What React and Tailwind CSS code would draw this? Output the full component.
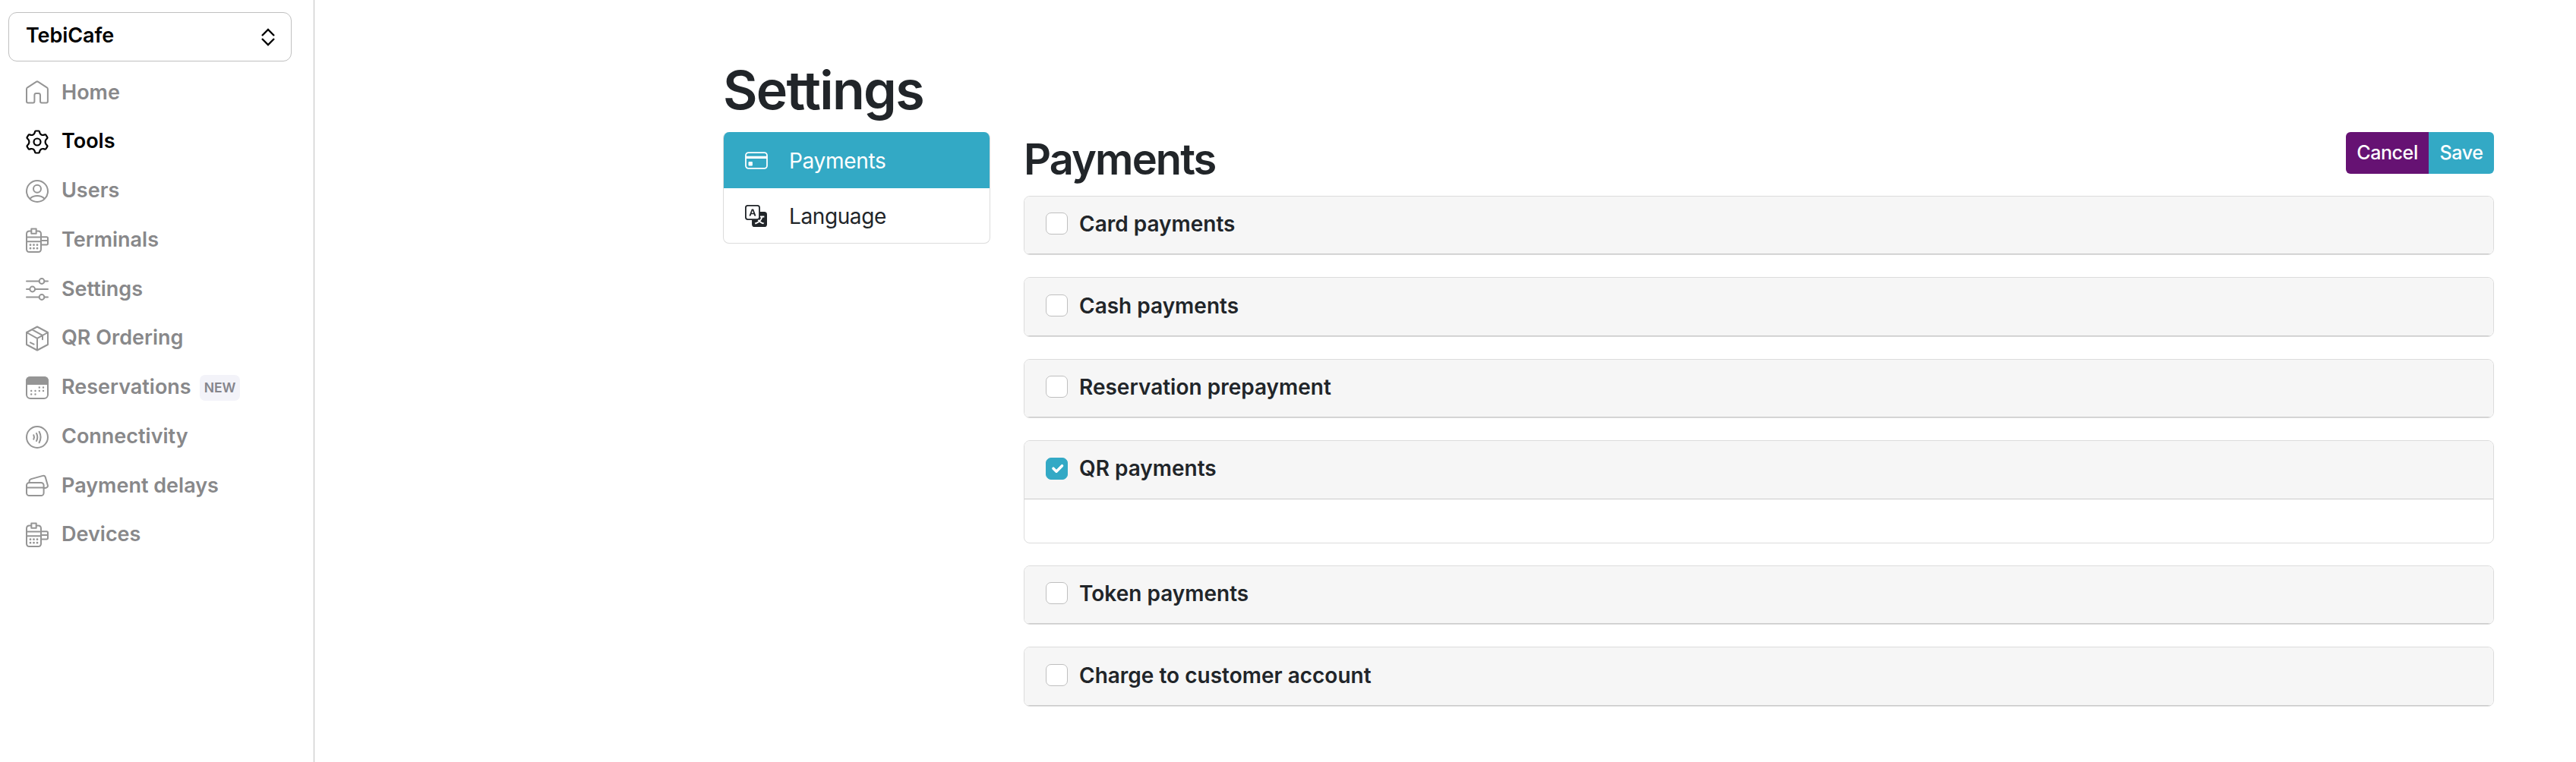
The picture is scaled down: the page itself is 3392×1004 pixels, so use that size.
import React, { useState } from 'react';
import clsx from 'clsx';

function Icon({ children, className }) {
  return (
    <svg
      viewBox="0 0 30 34"
      className={clsx('w-[30px] h-[34px] shrink-0', className)}
      fill="none"
      stroke="currentColor"
      strokeWidth="2"
      strokeLinecap="round"
      strokeLinejoin="round"
    >
      {children}
    </svg>
  );
}

const HomeIcon = () => (
  <Icon>
    <path d="M1 12.400c0-.8.4-1.600 1.100-2.100L13.600 2.800c.8-.5 1.900-.5 2.700 0l11.500 7.500c.7.5 1.100 1.300 1.100 2.100v16.200c0 1.100-.8 1.900-1.900 1.900h-6.100c-1.100 0-1.900-.8-1.900-1.900v-8.200c0-1.600-1-2.400-2.400-2.400h-2.800c-1.400 0-2.400.8-2.400 2.400v8.200c0 1.100-.8 1.900-1.900 1.900H2.900C1.800 30.500 1 29.700 1 28.600z" />
  </Icon>
);

const GearIcon = () => (
  <Icon>
    <circle cx="15" cy="17" r="4.500" strokeWidth="2.200" />
    <path strokeWidth="2.200" d="M11.500 5.400 12.200 3.200Q12.500 2.500 13.300 2.500h3.400Q17.500 2.500 17.800 3.200l.7 2.200q.5 1.300 1.900 2.100 1.400.7 2.800.4l2.100-.5q.9-.1 1.300.6l1.700 2.900q.4.700-.2 1.400l-1.500 1.600q-1 1.300-1 3.100t1 3.100l1.500 1.600q.6.700.2 1.400l-1.700 2.900q-.4.700-1.300.6l-2.100-.5q-1.400-.3-2.800.4-1.400.8-1.900 2.100l-.7 2.200q-.3.700-1.100.7h-3.400q-.8 0-1.100-.7l-.7-2.200q-.5-1.300-1.900-2.100-1.400-.7-2.800-.4l-2.100.5q-.9.100-1.300-.6l-1.700-2.900q-.4-.7.2-1.400l1.500-1.600q1-1.300 1-3.100t-1-3.100L1.900 12.300q-.6-.7-.2-1.400L3.400 8q.4-.7 1.300-.6l2.100.5q1.400.3 2.800-.4 1.400-.8 1.900-2.100z" />
  </Icon>
);

const UserIcon = () => (
  <Icon>
    <circle cx="15" cy="17" r="14" />
    <circle cx="15" cy="13.700" r="5" />
    <path d="M5.800 26.500c2.300-2.300 5.600-3.400 9.200-3.400s6.900 1.100 9.200 3.400" />
  </Icon>
);

const TerminalIcon = () => (
  <Icon>
    <path d="M7.200 4.600H4.800C2.500 4.600 1 6.100 1 8.400v19.800C1 30.500 2.500 32 4.800 32h11.400c2.300 0 3.800-1.500 3.800-3.800V8.400c0-2.300-1.500-3.800-3.800-3.800h-2.400" />
    <path d="M7.300 1.500h6.400v6.300H7.300zM1 12.600h19M1 18.200h19M20 12.300h7.400c1 0 1.600.6 1.600 1.600v6.900c0 1-.6 1.600-1.600 1.600H20M20 17h9" />
    <path strokeWidth="2.800" d="M6 22.700h.01M10.500 22.700h.01M15 22.700h.01M6 27.200h.01M10.500 27.200h.01M15 27.200h.01" />
  </Icon>
);

const SlidersIcon = () => (
  <Icon>
    <path d="M1 6.500h16.500M24.500 6.500H29M1 17h4M12 17h17M1 27.500h16.500M24.500 27.500H29" />
    <circle cx="21" cy="6.500" r="3.400" />
    <circle cx="8.700" cy="17" r="3.400" />
    <circle cx="21" cy="27.500" r="3.400" />
  </Icon>
);

const BoxIcon = () => (
  <Icon>
    <path d="M15 1.500 29 9v16L15 32.500 1 25V9zM1 9l14 7.800L29 9M15 16.800v15.700M8 5.200l14 7.700v5.400M6 22.400l4.600 2.200" />
  </Icon>
);

const CalendarIcon = () => (
  <Icon>
    <rect x="1" y="3" width="28" height="28" rx="5" />
    <path fill="currentColor" d="M1 12V8c0-3 2-5 5-5h18c3 0 5 2 5 5v4z" />
    <path strokeWidth="2.400" d="M17.800 16.500h.01M23 16.500h.01M7.200 21h.01M12.500 21h.01M17.800 21h.01M23 21h.01M7.200 25.500h.01M12.500 25.500h.01" />
  </Icon>
);

const ContactlessIcon = () => (
  <Icon>
    <circle cx="15" cy="17" r="14" />
    <path d="M10.300 14.200c.9 1.800.9 3.800 0 5.600M14 12c1.700 3.200 1.700 6.800 0 10M17.600 9.800c2.500 4.600 2.500 9.800 0 14.400" />
  </Icon>
);

const CardsIcon = () => (
  <Icon>
    <rect x="1" y="13" width="22.600" height="17" rx="3.600" />
    <path d="M1 19.500h22.600M4.600 13V11.300c0-1.600.9-2.700 2.400-3.200l15.300-4.200c1.700-.4 3.100.4 3.500 2l3 10.400c.5 1.700-.4 3.200-2.200 3.500l-3 .5" />
  </Icon>
);

const CreditCardIcon = () => (
  <Icon>
    <rect x="1" y="7.200" width="28" height="20.600" rx="3.500" strokeWidth="1.800" />
    <path d="M1 13.400h28" strokeWidth="3.400" strokeLinecap="butt" />
    <rect x="5.500" y="20" width="3.400" height="3.400" fill="currentColor" />
  </Icon>
);

// bootstrap "translate" glyph
const TranslateIcon = () => (
  <svg viewBox="0 0 16 16" className="w-[29px] h-[29px] shrink-0" fill="currentColor">
    <path d="M4.545 6.714 4.110 8H3l1.862-5h1.284L8 8H6.833l-.435-1.286H4.545zm1.634-.736L5.500 3.956h-.049l-.679 2.022H6.180z" />
    <path d="M0 2a2 2 0 0 1 2-2h7a2 2 0 0 1 2 2v3h3a2 2 0 0 1 2 2v7a2 2 0 0 1-2 2H7a2 2 0 0 1-2-2v-3H2a2 2 0 0 1-2-2V2zm2-1a1 1 0 0 0-1 1v7a1 1 0 0 0 1 1h7a1 1 0 0 0 1-1V2a1 1 0 0 0-1-1H2zm7.138 9.995c.193.301.402.583.630.846-.748.575-1.673 1.001-2.768 1.292.178.217.451.635.555.867 1.125-.359 2.080-.844 2.886-1.494.777.665 1.739 1.165 2.930 1.472.133-.254.414-.673.629-.890-1.125-.253-2.057-.694-2.820-1.284.681-.747 1.222-1.651 1.621-2.757H14V8h-3v1.047h.765c-.318.844-.740 1.546-1.272 2.130a6.066 6.066 0 0 1-.415-.492 1.988 1.988 0 0 1-.940.310z" />
  </svg>
);

const navItems = [
  { label: 'Home', icon: HomeIcon },
  { label: 'Tools', icon: GearIcon, active: true },
  { label: 'Users', icon: UserIcon },
  { label: 'Terminals', icon: TerminalIcon },
  { label: 'Settings', icon: SlidersIcon },
  { label: 'QR Ordering', icon: BoxIcon },
  { label: 'Reservations', icon: CalendarIcon, isNew: true },
  { label: 'Connectivity', icon: ContactlessIcon },
  { label: 'Payment delays', icon: CardsIcon },
  { label: 'Devices', icon: TerminalIcon },
];

const initialMethods = [
  { label: 'Card payments', header: 'h-[76px] pb-1' },
  { label: 'Cash payments', header: 'h-[77px] pb-[3px]' },
  { label: 'Reservation prepayment', header: 'h-[76px] pb-1' },
  { label: 'QR payments', checked: true, header: 'h-[77px] pb-[4px]' },
  { label: 'Token payments', header: 'h-[76px] pb-1' },
  { label: 'Charge to customer account', header: 'h-[77px] pb-[3px]' },
];

function Sidebar() {
  return (
    <aside className="w-[414px] shrink-0 border-r border-[#c0c0c0] pt-4 pl-[11px]">
      <button className="flex items-center justify-between w-[373px] h-[65px] pl-[22px] pr-[21px] rounded-[11px] border border-[#c0c0c0] text-black text-[27px] tracking-[-0.1px] font-semibold">
        <span className="pb-[2px]">TebiCafe</span>
        <svg viewBox="0 0 18 24" className="w-[18px] h-6" fill="none" stroke="currentColor" strokeWidth="2.400">
          <path d="m1 10 8-8 8 8M1 14l8 8 8-8" />
        </svg>
      </button>
      <nav className="mt-[9px] pl-[23px]">
        {navItems.map(({ label, icon: NavIcon, active, isNew }) => (
          <a
            key={label}
            className={clsx(
              'flex items-center h-[64.750px] text-[27px] font-semibold',
              active ? 'text-black' : 'text-[#88888a]'
            )}
          >
            <span className={active ? 'text-black' : 'text-[#959595]'}>
              <NavIcon />
            </span>
            <span className="ml-[17px] pb-[1px]">{label}</span>
            {isNew && (
              <span className="ml-[11px] h-[34px] px-[6px] rounded-[7px] bg-[#f3f3f9] text-[#85858c] text-[17.500px] leading-[33px]">
                NEW
              </span>
            )}
          </a>
        ))}
      </nav>
    </aside>
  );
}

function Checkbox({ checked, onChange }) {
  return (
    <button
      onClick={onChange}
      className={clsx(
        'flex items-center justify-center w-[29px] h-[29px] shrink-0 rounded-[7px] border',
        checked ? 'bg-[#33a9c5] border-[#33a9c5]' : 'bg-white border-[#bfbfbf]'
      )}
    >
      {checked && (
        <svg viewBox="0 0 20 20" className="w-5 h-5 ml-[3px]" fill="none" stroke="white" strokeWidth="3.600" strokeLinecap="round" strokeLinejoin="round">
          <path d="m4 10.200 4 4 7.500-7.500" />
        </svg>
      )}
    </button>
  );
}

export default function App() {
  const [methods, setMethods] = useState(initialMethods);

  const toggle = (label) => {
    setMethods(prev => prev.map(m => (m.label === label ? { ...m, checked: !m.checked } : m)));
  };

  return (
    <div className="flex h-[1004px] overflow-hidden bg-white font-['Inter',sans-serif] text-[#212529]">
      <Sidebar />
      <main className="flex-1 pl-[538px] pr-[108px] pt-[76px]">
        <h1 className="h-[98px] text-[70px] leading-[86px] font-[590] tracking-[-1.700px]">Settings</h1>
        <div className="flex items-start gap-11">
          <div className="w-[352px] h-[147px] shrink-0 rounded-[8px] overflow-hidden border border-[#dcdcdc] border-t-0">
            <a className="-mx-[1px] flex items-center h-[74px] pl-[29px] bg-[#33a9c5] text-white text-[28px] font-[430] tracking-[-0.3px]">
              <CreditCardIcon />
              <span className="ml-[28px] pt-[2px]">Payments</span>
            </a>
            <a className="flex items-center h-[72px] pl-[28px] text-[28px] font-[430] tracking-[-0.4px]">
              <TranslateIcon />
              <span className="ml-[29px] pt-[2px]">Language</span>
            </a>
          </div>

          <section className="flex-1">
            <div className="flex items-start justify-between h-[84px]">
              <h2 className="text-[56px] leading-[72px] font-[590] tracking-[-1.900px]">Payments</h2>
              <div className="flex h-[55px] rounded-[6px] overflow-hidden text-white text-[25px] font-[450] tracking-[-0.400px]">
                <button className="w-[109px] bg-[#661273]">Cancel</button>
                <button className="w-[86px] bg-[#33a9c5]">Save</button>
              </div>
            </div>

            <div className="flex flex-col gap-[29px]">
              {methods.map(m => (
                <div key={m.label} className="rounded-[8px] border border-[#dcdcdc] overflow-hidden">
                  <div className={clsx('flex items-center pl-7 bg-[#f6f6f6] border-b border-[#cccccc]', m.header)}>
                    <Checkbox checked={m.checked} onChange={() => toggle(m.label)} />
                    <span className="ml-[15px] text-[28px] font-semibold">{m.label}</span>
                  </div>
                  {m.checked && <div className="h-[57px]" />}
                </div>
              ))}
            </div>
          </section>
        </div>
      </main>
    </div>
  );
}
